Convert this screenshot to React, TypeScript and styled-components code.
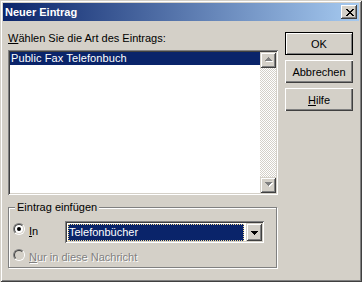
import React from "react"
import styled, { createGlobalStyle } from "styled-components"

const face = "#d4d0c8"
const shadow = "#808080"
const darkShadow = "#404040"
const highlight = "#ffffff"
const selection = "#0a246a"

const GlobalStyle = createGlobalStyle`
    html, body {
        margin: 0;
        padding: 0;
        background: ${face};
    }

    body {
        font-family: "Liberation Sans", Arial, sans-serif;
        font-size: 11px;
        color: #000;
    }
`

export default function App() {
    return (
        <>
            <GlobalStyle />
            <Window>
                <TitleBar>
                    <Title>Neuer Eintrag</Title>
                    <CloseButton title="Schließen">
                        <svg width="8" height="7" viewBox="0 0 8 7" shapeRendering="crispEdges">
                            <path fill="#000" d="M0 0h2v1h-2z M6 0h2v1h-2z M1 1h2v1h-2z M5 1h2v1h-2z M2 2h4v1h-4z M3 3h2v1h-2z M2 4h4v1h-4z M1 5h2v1h-2z M5 5h2v1h-2z M0 6h2v1h-2z M6 6h2v1h-2z" />
                        </svg>
                    </CloseButton>
                </TitleBar>

                <Body>
                    <Main>
                        <FieldLabel><u>W</u>ählen Sie die Art des Eintrags:</FieldLabel>

                        <ListBox>
                            <ListItems>
                                <ListItem $selected>Public Fax Telefonbuch</ListItem>
                            </ListItems>
                            <ScrollBar>
                                <ScrollButton>
                                    <DisabledArrow d="M3 0h1v1h-1z M2 1h3v1h-3z M1 2h5v1h-5z M0 3h7v1h-7z" />
                                </ScrollButton>
                                <ScrollTrack />
                                <ScrollButton>
                                    <DisabledArrow d="M0 0h7v1h-7z M1 1h5v1h-5z M2 2h3v1h-3z M3 3h1v1h-1z" />
                                </ScrollButton>
                            </ScrollBar>
                        </ListBox>

                        <GroupBox>
                            <GroupCaption>Eintrag einfügen</GroupCaption>
                            <OptionRow>
                                <Radio $checked />
                                <OptionLabel $width={36}><u>I</u>n</OptionLabel>
                                <Combo>
                                    <ComboValue>Telefonbücher</ComboValue>
                                    <ComboButton>
                                        <svg width="7" height="4" viewBox="0 0 7 4" shapeRendering="crispEdges">
                                            <path fill="#000" d="M0 0h7v1h-7z M1 1h5v1h-5z M2 2h3v1h-3z M3 3h1v1h-1z" />
                                        </svg>
                                    </ComboButton>
                                </Combo>
                            </OptionRow>
                            <OptionRow $second>
                                <Radio $disabled />
                                <OptionLabel $disabled><u>N</u>ur in diese Nachricht</OptionLabel>
                            </OptionRow>
                        </GroupBox>
                    </Main>

                    <Buttons>
                        <PushButton $default>OK</PushButton>
                        <PushButton>Abbrechen</PushButton>
                        <PushButton><u>H</u>ilfe</PushButton>
                    </Buttons>
                </Body>
            </Window>
        </>
    )
}


function DisabledArrow({ d }: { d: string }) {
    return (
        <svg width="8" height="5" viewBox="0 0 8 5" shapeRendering="crispEdges">
            <path fill={highlight} transform="translate(1 1)" d={d} />
            <path fill={shadow} d={d} />
        </svg>
    )
}


const Window = styled.div`
    display: flex;
    flex-direction: column;
    box-sizing: border-box;
    width: 362px;
    height: 282px;
    padding: 3px;
    background: ${face};
    box-shadow:
        inset 1px 1px ${face},
        inset -1px -1px ${darkShadow},
        inset 2px 2px ${highlight},
        inset -2px -2px ${shadow};
`

const TitleBar = styled.header`
    display: flex;
    align-items: center;
    justify-content: space-between;
    height: 18px;
    padding: 0 2px 0 2px;
    background: linear-gradient(to right, ${selection}, #a6caf0);
`

const Title = styled.h1`
    margin: 0;
    font-size: 11px;
    font-weight: bold;
    color: #fff;
    line-height: 13px;
`

const CloseButton = styled.span`
    display: flex;
    align-items: center;
    justify-content: center;
    box-sizing: border-box;
    width: 16px;
    height: 14px;
    padding-left: 1px;
    background: ${face};
    box-shadow:
        inset -1px -1px ${darkShadow},
        inset 1px 1px ${highlight},
        inset -2px -2px ${shadow};
`

const Body = styled.div`
    display: flex;
    gap: 7px;
    padding: 11px 0 0 5px;
`

const Main = styled.section`
    display: flex;
    flex-direction: column;
    width: 270px;
`

const FieldLabel = styled.label`
    line-height: 13px;
    margin-bottom: 5px;
`

const ListBox = styled.div`
    display: flex;
    box-sizing: border-box;
    height: 145px;
    padding: 2px;
    background: #fff;
    box-shadow:
        inset 1px 1px ${shadow},
        inset -1px -1px ${highlight},
        inset 2px 2px ${darkShadow},
        inset -2px -2px ${face};
`

const ListItems = styled.ul`
    flex: 1;
    margin: 0;
    padding: 0;
    list-style: none;
`

const ListItem = styled.li<{ $selected?: boolean }>`
    height: 13px;
    line-height: 13px;
    padding-left: 1px;
    white-space: nowrap;
    letter-spacing: 0.1px;
    background: ${({ $selected }) => $selected ? selection : 'transparent'};
    color: ${({ $selected }) => $selected ? '#fff' : '#000'};
`

const ScrollBar = styled.div`
    display: flex;
    flex-direction: column;
    width: 16px;
`

const ScrollButton = styled.span`
    display: flex;
    align-items: center;
    justify-content: center;
    box-sizing: border-box;
    height: 16px;
    padding: 0 0 1px 1px;
    background: ${face};
    box-shadow:
        inset 1px 1px ${face},
        inset -1px -1px ${darkShadow},
        inset 2px 2px ${highlight},
        inset -2px -2px ${shadow};
`

const ScrollTrack = styled.span`
    flex: 1;
    background: repeating-conic-gradient(${highlight} 0 25%, ${face} 0 50%) 0 0 / 2px 2px;
`

const GroupBox = styled.fieldset`
    position: relative;
    box-sizing: border-box;
    width: 269px;
    height: 61px;
    margin: 12px 0 0;
    padding: 13px 0 0 4px;
    border: 1px solid ${shadow};
    box-shadow: inset 1px 1px ${highlight}, 1px 1px ${highlight};
`

const GroupCaption = styled.span`
    position: absolute;
    top: -7px;
    left: 6px;
    padding: 0 2px;
    line-height: 13px;
    background: ${face};
`

const OptionRow = styled.div<{ $second?: boolean }>`
    display: flex;
    align-items: flex-start;
    margin-top: ${({ $second }) => $second ? '4px' : '0'};
`

const Radio = styled.span<{ $checked?: boolean, $disabled?: boolean }>`
    position: relative;
    box-sizing: border-box;
    flex: none;
    width: 12px;
    height: 12px;
    margin-top: 2px;
    border-radius: 50%;
    border: 1px solid;
    border-color: ${shadow} ${highlight} ${highlight} ${shadow};

    &::before {
        content: '';
        display: block;
        box-sizing: border-box;
        width: 10px;
        height: 10px;
        border-radius: 50%;
        border: 1px solid;
        border-color: ${darkShadow} ${face} ${face} ${darkShadow};
        background: ${({ $disabled }) => $disabled ? face : '#fff'};
    }

    &::after {
        content: '';
        display: ${({ $checked }) => $checked ? 'block' : 'none'};
        position: absolute;
        top: 3px;
        left: 3px;
        width: 4px;
        height: 4px;
        border-radius: 50%;
        background: #000;
    }
`

const OptionLabel = styled.span<{ $disabled?: boolean, $width?: number }>`
    width: ${({ $width }) => $width ? `${$width}px` : 'auto'};
    margin: 4px 0 0 4px;
    line-height: 13px;
    white-space: nowrap;
    color: ${({ $disabled }) => $disabled ? shadow : '#000'};
    text-shadow: ${({ $disabled }) => $disabled ? `1px 1px ${highlight}` : 'none'};
`

const Combo = styled.div`
    display: flex;
    box-sizing: border-box;
    width: 199px;
    height: 22px;
    padding: 2px;
    background: #fff;
    box-shadow:
        inset 1px 1px ${shadow},
        inset -1px -1px ${highlight},
        inset 2px 2px ${darkShadow},
        inset -2px -2px ${face};
`

const ComboValue = styled.span`
    flex: 1;
    margin: 1px 2px 0 1px;
    padding-left: 1px;
    line-height: 16px;
    color: #fff;
    background: ${selection};
    outline: 1px dotted #f5db95;
    outline-offset: -1px;
`

const ComboButton = styled.span`
    display: flex;
    align-items: center;
    justify-content: center;
    box-sizing: border-box;
    width: 16px;
    padding: 1px 0 0 1px;
    background: ${face};
    box-shadow:
        inset 1px 1px ${face},
        inset -1px -1px ${darkShadow},
        inset 2px 2px ${highlight},
        inset -2px -2px ${shadow};
`

const Buttons = styled.div`
    display: flex;
    flex-direction: column;
    gap: 5px;
    width: 68px;
`

const PushButton = styled.button<{ $default?: boolean }>`
    box-sizing: border-box;
    height: 23px;
    padding: 0;
    font: inherit;
    color: #000;
    background: ${face};
    border: ${({ $default }) => $default ? '1px solid #000' : 'none'};
    box-shadow: ${({ $default }) => $default
        ? `inset 1px 1px ${highlight}, inset -1px -1px ${shadow}`
        : `inset 1px 1px ${highlight}, inset -1px -1px ${darkShadow}, inset -2px -2px ${shadow}`};
`
